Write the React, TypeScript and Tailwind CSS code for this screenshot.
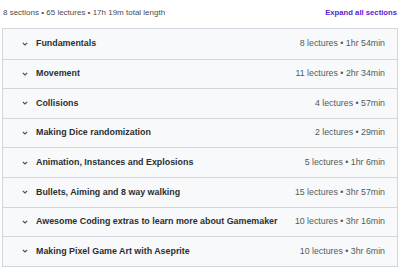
import React from "react";

const sections = [
  ["Fundamentals", "8 lectures • 1hr 54min"],
  ["Movement", "11 lectures • 2hr 34min"],
  ["Collisions", "4 lectures • 57min"],
  ["Making Dice randomization", "2 lectures • 29min"],
  ["Animation, Instances and Explosions", "5 lectures • 1hr 6min"],
  ["Bullets, Aiming and 8 way walking", "15 lectures • 3hr 57min"],
  ["Awesome Coding extras to learn more about Gamemaker", "10 lectures • 3hr 16min"],
  ["Making Pixel Game Art with Aseprite", "10 lectures • 3hr 6min"],
];

function Chevron() {
  return (
    <svg width="6" height="4" viewBox="0 0 6 4" className="text-[#4a4d50]">
      <path d="M0.8 0.8l2.2 2.2L5.2 0.8" fill="none" stroke="currentColor" strokeWidth="1.1" />
    </svg>
  );
}

export default function App() {
  return (
    <div className="w-[400px] h-[268px] bg-white overflow-hidden" style={{ fontFamily: '"Liberation Sans", Arial, sans-serif' }}>
      <div className="flex items-center justify-between h-[28px] pl-[3px] pr-[3px] pb-[2px]">
        <span className="text-[8px] text-[#4a4d50]">8 sections • 65 lectures • 17h 19m total length</span>
        <span className="text-[7.7px] font-bold text-[#5624d0]">Expand all sections</span>
      </div>
      <div className="mx-[2px] border border-[#d1d7dc]">
        {sections.map(([t, m], i) => (
          <div
            key={i}
            className={`flex items-center h-[29.6px] bg-[#f7f9fa] pl-[19px] pr-[12px] ${i > 0 ? "border-t border-[#d1d7dc]" : ""}`}
          >
            <Chevron />
            <span className="ml-[8px] text-[8.9px] font-bold text-[#2d2f31] flex-1">{t}</span>
            <span className="text-[8.8px] text-[#55595c]">{m}</span>
          </div>
        ))}
      </div>
    </div>
  );
}
